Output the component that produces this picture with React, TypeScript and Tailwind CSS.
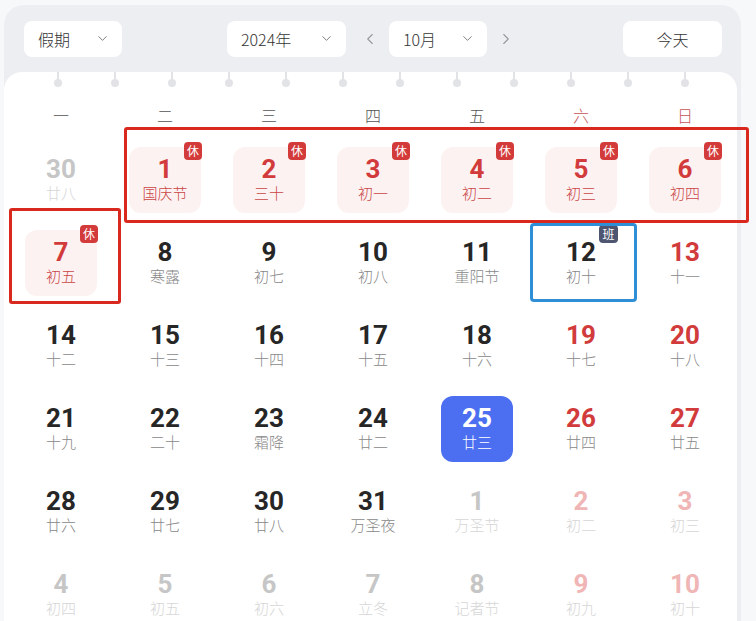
import { ChevronDown, ChevronLeft, ChevronRight } from 'lucide-react';

type Day = {
  n: number;
  lunar: string;
  kind: 'prev' | 'cur' | 'next';
  weekend?: boolean;
  rest?: boolean;
  work?: boolean;
  today?: boolean;
};

const cn = '"Noto Sans CJK SC", "Noto Sans", sans-serif';
const num = 'Roboto, "Liberation Sans", sans-serif';

const weekdays = ['一', '二', '三', '四', '五', '六', '日'];

const days: Day[] = [
  { n: 30, lunar: '廿八', kind: 'prev' },
  { n: 1, lunar: '国庆节', kind: 'cur', rest: true },
  { n: 2, lunar: '三十', kind: 'cur', rest: true },
  { n: 3, lunar: '初一', kind: 'cur', rest: true },
  { n: 4, lunar: '初二', kind: 'cur', rest: true },
  { n: 5, lunar: '初三', kind: 'cur', rest: true },
  { n: 6, lunar: '初四', kind: 'cur', rest: true },
  { n: 7, lunar: '初五', kind: 'cur', rest: true },
  { n: 8, lunar: '寒露', kind: 'cur' },
  { n: 9, lunar: '初七', kind: 'cur' },
  { n: 10, lunar: '初八', kind: 'cur' },
  { n: 11, lunar: '重阳节', kind: 'cur' },
  { n: 12, lunar: '初十', kind: 'cur', work: true },
  { n: 13, lunar: '十一', kind: 'cur', weekend: true },
  { n: 14, lunar: '十二', kind: 'cur' },
  { n: 15, lunar: '十三', kind: 'cur' },
  { n: 16, lunar: '十四', kind: 'cur' },
  { n: 17, lunar: '十五', kind: 'cur' },
  { n: 18, lunar: '十六', kind: 'cur' },
  { n: 19, lunar: '十七', kind: 'cur', weekend: true },
  { n: 20, lunar: '十八', kind: 'cur', weekend: true },
  { n: 21, lunar: '十九', kind: 'cur' },
  { n: 22, lunar: '二十', kind: 'cur' },
  { n: 23, lunar: '霜降', kind: 'cur' },
  { n: 24, lunar: '廿二', kind: 'cur' },
  { n: 25, lunar: '廿三', kind: 'cur', today: true },
  { n: 26, lunar: '廿四', kind: 'cur', weekend: true },
  { n: 27, lunar: '廿五', kind: 'cur', weekend: true },
  { n: 28, lunar: '廿六', kind: 'cur' },
  { n: 29, lunar: '廿七', kind: 'cur' },
  { n: 30, lunar: '廿八', kind: 'cur' },
  { n: 31, lunar: '万圣夜', kind: 'cur' },
  { n: 1, lunar: '万圣节', kind: 'next' },
  { n: 2, lunar: '初二', kind: 'next', weekend: true },
  { n: 3, lunar: '初三', kind: 'next', weekend: true },
  { n: 4, lunar: '初四', kind: 'next' },
  { n: 5, lunar: '初五', kind: 'next' },
  { n: 6, lunar: '初六', kind: 'next' },
  { n: 7, lunar: '立冬', kind: 'next' },
  { n: 8, lunar: '记者节', kind: 'next' },
  { n: 9, lunar: '初九', kind: 'next', weekend: true },
  { n: 10, lunar: '初十', kind: 'next', weekend: true },
];

const Select = ({ label, width }: { label: string; width: string }) => (
  <div className={`h-[36px] ${width} bg-white rounded-[8px] flex items-center justify-between pl-[14px] pr-[12px]`}>
    <span className="text-[16px] font-light text-[#333]">{label}</span>
    <ChevronDown className="w-[15px] h-[15px] text-[#777]" strokeWidth={1.5} />
  </div>
);

const DayCell = ({ d }: { d: Day }) => {
  let numColor = 'text-[#262626]';
  let lunarColor = 'text-[#888]';
  let box = '';

  if (d.kind !== 'cur') {
    numColor = d.weekend ? 'text-[#f0b5b5]' : 'text-[#c6c6c6]';
    lunarColor = 'text-[#d6d6d6]';
  } else if (d.today) {
    numColor = 'text-white';
    lunarColor = 'text-white';
    box = 'bg-[#4c6ef0]';
  } else if (d.rest) {
    numColor = 'text-[#d23b3b]';
    lunarColor = 'text-[#c94545]';
    box = 'bg-[#fdf2f2]';
  } else if (d.weekend) {
    numColor = 'text-[#d23b3b]';
  }

  return (
    <div className="h-[83px] flex items-center justify-center">
      <div className={`relative w-[72px] h-[66px] rounded-[12px] flex flex-col items-center justify-center pb-[2px] ${box}`}>
        <span className={`text-[26px] leading-[28px] font-bold ${numColor}`} style={{ fontFamily: num }}>
          {d.n}
        </span>
        <span className={`text-[15px] leading-[20px] font-light ${lunarColor}`}>{d.lunar}</span>
        {d.rest && (
          <span className="absolute top-[-5px] right-[-1px] w-[18px] h-[18px] rounded-[4px] bg-[#d33a3a] text-white text-[12px] leading-[18px] text-center">
            休
          </span>
        )}
        {d.work && (
          <span className="absolute top-[-5px] right-[-1px] w-[19px] h-[18px] rounded-[4px] bg-[#4d5570] text-white text-[12px] leading-[18px] text-center">
            班
          </span>
        )}
      </div>
    </div>
  );
};

export default function App() {
  return (
    <div className="relative w-[756px] h-[621px] overflow-hidden bg-[#f7f8fa] pt-[5px] pl-[4px]" style={{ fontFamily: cn }}>
      <div className="w-[737px] h-[640px] bg-[#eceef2] rounded-t-[20px] pr-[4px]">
        <div className="h-[67px] flex items-center pl-[20px] pr-[15px]">
          <Select label="假期" width="w-[98px]" />
          <div className="ml-[105px]">
            <Select label="2024年" width="w-[119px]" />
          </div>
          <ChevronLeft className="ml-[15px] w-[18px] h-[18px] text-[#999]" strokeWidth={1.5} />
          <div className="ml-[10px]">
            <Select label="10月" width="w-[98px]" />
          </div>
          <ChevronRight className="ml-[10px] w-[18px] h-[18px] text-[#999]" strokeWidth={1.5} />
          <div className="ml-auto h-[36px] w-[99px] bg-white rounded-[8px] flex items-center justify-center text-[16px] font-light text-[#333]">
            今天
          </div>
        </div>

        <div className="bg-white rounded-t-[18px] h-[580px]">
          <div className="h-[16px] flex pl-[50px] gap-[49px]">
            {Array.from({ length: 12 }).map((_, i) => (
              <div key={i} className="flex flex-col items-center w-[8px]">
                <div className="w-[2px] h-[8px] bg-[#e2e3e7]" />
                <div className="w-[8px] h-[8px] rounded-full bg-[#e2e3e7] -mt-[1px]" />
              </div>
            ))}
          </div>

          <div className="ml-[5px] w-[728px]">
            <div className="mt-[12px] h-[30px] grid grid-cols-7">
              {weekdays.map((w, i) => (
                <div
                  key={w}
                  className={`flex items-center justify-center text-[16px] font-light ${i >= 5 ? 'text-[#c8535a]' : 'text-[#555]'}`}
                >
                  {w}
                </div>
              ))}
            </div>
            <div className="mt-[8px] grid grid-cols-7">
              {days.map((d, i) => (
                <DayCell key={i} d={d} />
              ))}
            </div>
          </div>
        </div>
      </div>

      <div className="absolute left-[124px] top-[127px] w-[625px] h-[96px] border-[3px] border-[#d9291e] rounded-[3px]" />
      <div className="absolute left-[9px] top-[208px] w-[112px] h-[96px] border-[3px] border-[#d9291e] rounded-[3px]" />
      <div className="absolute left-[530px] top-[223px] w-[107px] h-[79px] border-[3px] border-[#2e8fd6] rounded-[4px]" />
    </div>
  );
}
